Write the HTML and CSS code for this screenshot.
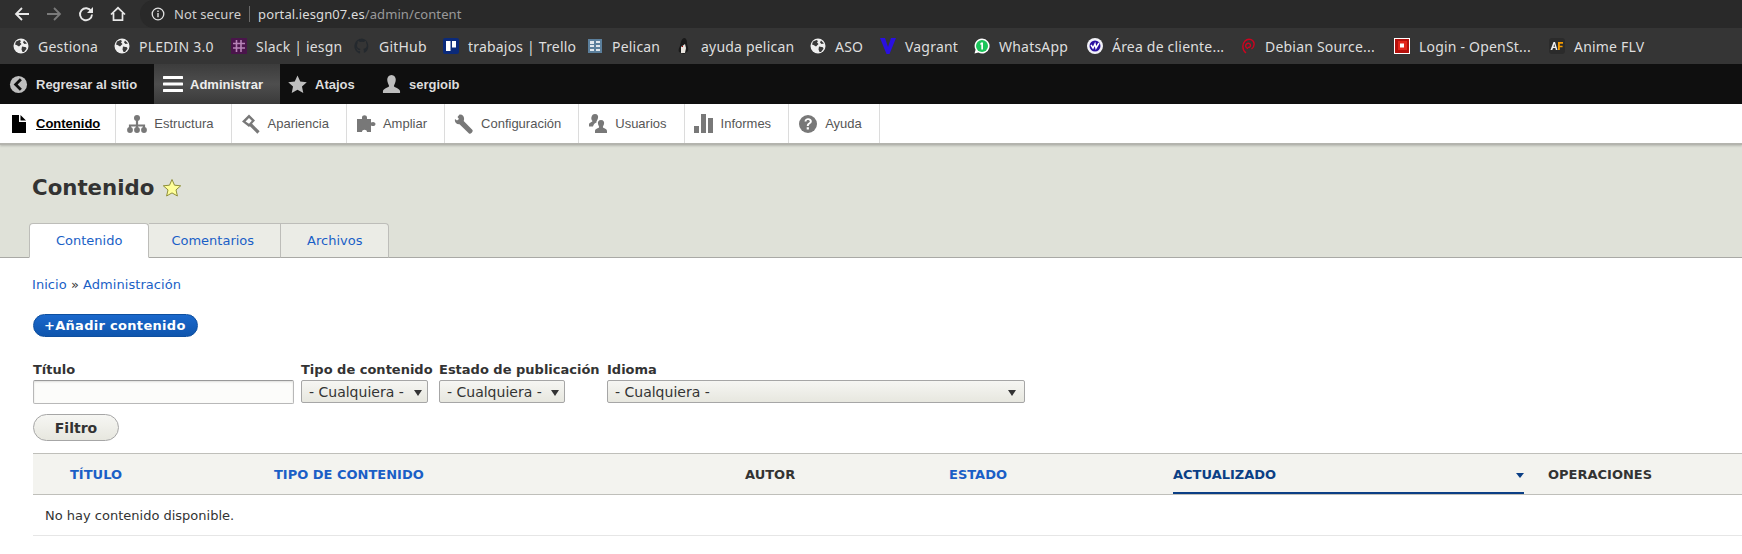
FILE: index.html
```html
<!DOCTYPE html>
<html lang="es">
<head>
<meta charset="utf-8">
<title>Contenido</title>
<link rel="stylesheet" href="styles.css">
</head>
<body>
<div class="browser">
  <div class="navbar">
    <div class="nav-buttons">
      <svg class="nav-icon" viewBox="0 0 16 16"><path d="M15 8H2.500M8 2 2 8l6 6" fill="none" stroke="#e8e8e8" stroke-width="1.800"/></svg>
      <svg class="nav-icon" viewBox="0 0 16 16"><path d="M1 8h12.500M8 2l6 6-6 6" fill="none" stroke="#7a7a7a" stroke-width="1.800"/></svg>
      <svg class="nav-icon" viewBox="0 0 16 16"><path d="M13.200 5.200A6 6 0 1 0 14 8.500" fill="none" stroke="#e8e8e8" stroke-width="1.900"/><path d="M15 1v6H9z" fill="#e8e8e8"/></svg>
      <svg class="nav-icon" viewBox="0 0 16 16"><path d="M1 8.500 8 1.800l7 6.700M3.500 7v7.200h9V7" fill="none" stroke="#e8e8e8" stroke-width="1.700"/></svg>
    </div>
    <div class="omnibox">
      <svg class="info" viewBox="0 0 14 14"><circle cx="7" cy="7" r="5.800" fill="none" stroke="#e0e0e0" stroke-width="1.300"/><path d="M6.300 6h1.400v4.300H6.300zM6.300 3.500h1.400v1.400H6.300z" fill="#e0e0e0"/></svg>
      <span class="not-secure">Not secure</span>
      <span class="url"><b>portal.iesgn07.es</b>/admin/content</span>
    </div>
  </div>
  <div class="bookmarks">
    <a class="bm"><svg class="fav" viewBox="0 0 16 16"><use href="#globe"/></svg>Gestiona</a>
    <a class="bm"><svg class="fav" viewBox="0 0 16 16"><use href="#globe"/></svg>PLEDIN 3.0</a>
    <a class="bm"><svg class="fav" viewBox="0 0 16 16"><rect width="16" height="16" fill="#4a154b"/><path d="M5.500 2v12M10 2v12M2 5.500h12M2 10h12" stroke="#b784b8" stroke-width="1.600"/></svg>Slack | iesgn</a>
    <a class="bm"><svg class="fav" viewBox="0 0 16 16"><path d="M8 .5a7.700 7.700 0 0 0-2.400 15c.4 0 .5-.2.5-.4v-2c-2.200.5-2.700-.9-2.700-.9-.4-.9-.9-1.200-.9-1.200-.7-.5 0-.5 0-.5.8 0 1.200.8 1.200.8.7 1.200 1.900.9 2.300.7.1-.5.3-.9.5-1.100-1.700-.2-3.500-.9-3.500-3.800 0-.8.3-1.500.8-2-.1-.2-.4-1 .1-2 0 0 .6-.2 2.100.8a7.300 7.300 0 0 1 3.800 0c1.500-1 2.100-.8 2.100-.8.4 1 .2 1.800.1 2 .5.5.8 1.200.8 2 0 2.900-1.800 3.600-3.500 3.800.3.2.5.7.5 1.400v2.100c0 .2.1.5.5.4A7.700 7.700 0 0 0 8 .5z" fill="#24292e"/></svg>GitHub</a>
    <a class="bm"><svg class="fav" viewBox="0 0 16 16"><rect width="16" height="16" rx="2" fill="#0b2a7a"/><rect x="3" y="3" width="4.500" height="10" fill="#fff"/><rect x="9" y="3" width="4" height="6.500" fill="#fff"/></svg>trabajos | Trello</a>
    <a class="bm"><svg class="fav" viewBox="0 0 16 16"><rect x="1" y="1" width="14" height="14" fill="#5b7f9c"/><path d="M3 3h4v3H3zM9 3h4v2H9zM3 7h4v2H3zM9 7h4v2H9zM3 11h4v2H3zM9 11h4v2H9z" fill="#dfe6ec"/></svg>Pelican</a>
    <a class="bm"><svg class="fav" viewBox="0 0 16 16"><path d="M8 0C5 1 5 5 4 8c-1 2-2 4-1 6l5 2 4-3c1-3-1-5-1-8S10 0 8 0z" fill="#1a1a1a"/><path d="M5 9l4-3 1 4-1 5H5z" fill="#e8e4de"/><path d="M6 8h1v1H6z" fill="#b00"/></svg>ayuda pelican</a>
    <a class="bm"><svg class="fav" viewBox="0 0 16 16"><use href="#globe"/></svg>ASO</a>
    <a class="bm"><svg class="fav" viewBox="0 0 16 16"><path d="M0 0h5l3 9 3-9h5L9.500 16h-3z" fill="#2a10e0"/></svg>Vagrant</a>
    <a class="bm"><svg class="fav" viewBox="0 0 16 16"><path d="M8 .5a7.500 7.500 0 0 0-6.400 11.300L.5 15.500l3.800-1A7.500 7.500 0 1 0 8 .5z" fill="#fff"/><circle cx="8" cy="8" r="6" fill="#1bc45a"/><path d="M7.200 4.500h1.800v7H7.300V6.400l-1 .4V5.500z" fill="#fff"/></svg>WhatsApp</a>
    <a class="bm"><svg class="fav" viewBox="0 0 16 16"><circle cx="8" cy="8" r="8" fill="#f2f2f8"/><circle cx="8" cy="8" r="5.500" fill="#2a10a0"/><path d="M4 7l2 3 2-4 1 4 3-5" fill="none" stroke="#fff" stroke-width="1.500"/></svg>Área de cliente...</a>
    <a class="bm"><svg class="fav" viewBox="0 0 16 16"><path d="M8 10.500C5.500 10 5 7.500 6.500 6c1.500-1.500 4-.5 4 1.500 0 1.500-1.500 2.500-2.500 1.500M6 15C2 12 2 6 5 3s8-2 9 2c.5 3-1 5-2.500 6" fill="none" stroke="#d0021f" stroke-width="1.400"/></svg>Debian Source...</a>
    <a class="bm"><svg class="fav" viewBox="0 0 16 16"><rect width="16" height="16" fill="#fff"/><rect x="1" y="1" width="14" height="14" fill="#b5100c"/><rect x="4" y="3" width="9" height="9" fill="#e3251b"/><rect x="6" y="5.500" width="4" height="4" fill="#fff"/></svg>Login - OpenSt...</a>
    <a class="bm"><svg class="fav" viewBox="0 0 16 16"><rect width="16" height="16" rx="3" fill="#2b2b2b"/><path d="M1.500 12 4.500 4h1.500l2.500 8H6.900l-.5-2H4l-.7 2zM4.500 8.700h1.500L5.300 6z" fill="#eee"/><path d="M9 4h5v1.700h-3.200v2h2.800v1.600h-2.800V12H9z" fill="#f59a00"/></svg>Anime FLV</a>
  </div>
</div>

<svg class="defs" width="0" height="0" aria-hidden="true">
  <symbol id="globe" viewBox="0 0 16 16">
    <circle cx="8" cy="8" r="7.500" fill="#efefef"/>
    <path d="M3 3.500 6.500 2 8 3 7 4.500 8.500 6 6 8.500 3.500 7 2 6.500zM9 8.500l4 .8.5 1.500L11 14H9.500L8.500 11.500zM11 2.500l3 3-2.500.5L10 4.500z" fill="#3a3a3a"/>
  </symbol>
</svg>

<nav class="toolbar">
  <a class="tb tb-back"><svg class="tb-icon" viewBox="0 0 20 20"><circle cx="10" cy="10" r="9" fill="#bebebe"/><path d="M12.500 4.500 7 10l5.500 5.500" fill="none" stroke="#0f0f0f" stroke-width="3"/></svg>Regresar al sitio</a>
  <a class="tb tb-admin"><svg class="tb-ham" viewBox="0 0 20 18"><path d="M1 2.500h18M1 9h18M1 15.500h18" stroke="#fff" stroke-width="3" stroke-linecap="round"/></svg>Administrar</a>
  <a class="tb tb-short"><svg class="tb-icon" viewBox="0 0 20 20"><path d="M10 .5l2.900 6.300 6.900.8-5.100 4.600 1.400 6.800L10 15.600l-6.100 3.400 1.400-6.800L.2 7.600l6.900-.8z" fill="#bebebe"/></svg>Atajos</a>
  <a class="tb tb-user"><svg class="tb-icon" viewBox="0 0 20 20"><path d="M10 0c3 0 4.500 2.300 4.500 5S13 10 12.500 11.500c-.2 1.500 6.500 2.500 6.500 5.500v2H1v-2c0-3 6.700-4 6.500-5.500C7 10 5.500 7.700 5.500 5S7 0 10 0z" fill="#bebebe"/></svg>sergioib</a>
</nav>

<nav class="tray">
  <a class="tray-item active"><svg class="tray-icon" viewBox="0 0 16 18"><path d="M1 0h7v7h7v11H1z M9.500 0 15 5.500H9.500z" fill="#000"/></svg>Contenido</a>
  <a class="tray-item"><svg class="tray-icon" viewBox="0 0 20 20"><path d="M10 4v11M3 15v-3.500h14V15" fill="none" stroke="#787878" stroke-width="2.200"/><circle cx="10" cy="4" r="3" fill="#787878"/><circle cx="3" cy="16" r="2.900" fill="#787878"/><circle cx="10" cy="16" r="2.900" fill="#787878"/><circle cx="17" cy="16" r="2.900" fill="#787878"/></svg>Estructura</a>
  <a class="tray-item"><svg class="tray-icon" viewBox="0 0 20 20"><path d="M8 .5 14 6.500 8 13 1 7.500zM8 4 4.500 7.500 8 9.800 10.800 6.800z" fill="#787878" fill-rule="evenodd"/><path d="M9.500 10.500 17.500 18.500" stroke="#787878" stroke-width="3.200"/></svg>Apariencia</a>
  <a class="tray-item"><svg class="tray-icon" viewBox="0 0 20 20"><path d="M1 5h5V3.500C6 .5 11 .5 11 3.500V5h4v3.500c2.500-1.500 4.500 0 4.500 1.500s-2 3-4.500 1.500V18h-4c0-3-5-3-5 0H1z" fill="#787878"/></svg>Ampliar</a>
  <a class="tray-item"><svg class="tray-icon" viewBox="0 0 20 20"><path d="M5.500.5 3.500 3 5 5 3 6.500 1 5C.3 8 2 10.500 5.500 10.300L15 19.500c1.500 1 4.500-1.500 3.500-3.500L9.700 7C11 3 9 0 5.500.5z" fill="#787878"/></svg>Configuración</a>
  <a class="tray-item"><svg class="tray-icon" viewBox="0 0 20 20"><path d="M7 0c2.500 0 3.500 2 3 4-.5 2.500-2 3-1.500 4.500-1.500.5-3 1.500-3.500 4H1v-2c0-2 3.500-2.500 3.500-3.500C3.500 6 3 4.500 3.500 3 4 1 5 0 7 0z" fill="#787878"/><path d="M13 6c2.500 0 3.500 2 3 4-.3 1.500-1.500 2.500-1 3.500.5.800 4 1.200 4 3.500v2H7v-2c0-2.300 3.500-2.700 4-3.500.5-1-.7-2-1-3.500C9.500 8 10.500 6 13 6z" fill="#787878"/></svg>Usuarios</a>
  <a class="tray-item"><svg class="tray-icon" viewBox="0 0 20 20"><path d="M0 12h5v7H0zM7 0h5v19H7zM14 4h5v15h-5z" fill="#787878"/></svg>Informes</a>
  <a class="tray-item"><svg class="tray-icon" viewBox="0 0 20 20"><circle cx="10" cy="10" r="9" fill="#787878"/><path d="M6.500 7.500C6.700 5 8.500 4.200 10 4.200c2.500 0 4 1.500 3.800 3.300-.2 2.300-3 2.500-3 4.500H8.800c0-3 3-3.300 3-4.500 0-1-.8-1.500-1.800-1.500S8.500 6.300 8.500 7.500zM8.700 13.200h2.200v2.300H8.700z" fill="#fff"/></svg>Ayuda</a>
</nav>

<header class="page-head">
  <h1 class="page-title">Contenido <svg class="fav-star" viewBox="0 0 20 20"><path d="M10 1.500l2.500 5.700 6.200.6-4.700 4.100 1.400 6.100L10 14.900 4.600 18l1.400-6.100L1.300 7.800l6.200-.6z" fill="#ffff9a" stroke="#8f8f3a" stroke-width="1"/></svg></h1>
  <ul class="tabs">
    <li class="tab active"><a>Contenido</a></li>
    <li class="tab"><a>Comentarios</a></li>
    <li class="tab"><a>Archivos</a></li>
  </ul>
</header>

<main class="content">
  <p class="crumbs"><a>Inicio</a> » <a>Administración</a></p>
  <p class="actions"><a class="add-btn">+Añadir contenido</a></p>
  <form class="filters">
    <div class="filter-row">
      <label class="field"><span class="field-label">Título</span><input class="text-input" type="text"></label>
      <label class="field"><span class="field-label">Tipo de contenido</span><span class="select-wrap"><select class="select sel-type"><option>- Cualquiera -</option></select></span></label>
      <label class="field"><span class="field-label">Estado de publicación</span><span class="select-wrap"><select class="select sel-state"><option>- Cualquiera -</option></select></span></label>
      <label class="field"><span class="field-label">Idioma</span><span class="select-wrap select-wrap-lang"><select class="select sel-lang"><option>- Cualquiera -</option></select></span></label>
    </div>
    <button class="filter-btn" type="button">Filtro</button>
  </form>
  <table class="data">
    <colgroup><col class="c0"><col class="c1"><col class="c2"><col class="c3"><col class="c4"><col class="c5"><col class="c6"></colgroup>
    <thead>
      <tr>
        <th></th>
        <th><a>Título</a></th>
        <th><a>Tipo de contenido</a></th>
        <th>Autor</th>
        <th><a>Estado</a></th>
        <th class="sorted"><a>Actualizado</a><span class="sort-arrow"></span></th>
        <th>Operaciones</th>
      </tr>
    </thead>
    <tbody>
      <tr><td colspan="7">No hay contenido disponible.</td></tr>
    </tbody>
  </table>
</main>
</body>
</html>
```

FILE: styles.css
```css
html, body { margin: 0; padding: 0; }
body {
  width: 1742px;
  height: 554px;
  overflow: hidden;
  background: #fff;
  color: #333;
  font-family: "DejaVu Sans", sans-serif;
  font-size: 13px;
}
a { color: #1a5fc6; text-decoration: none; }
.defs { display: block; height: 0; }

/* browser chrome */
.browser { font-family: "Noto Sans", sans-serif; color: #dedede; }
.navbar { height: 28px; background: #2f2f2f; display: flex; align-items: center; }
.nav-buttons { display: flex; gap: 16px; padding-left: 14px; width: 126px; box-sizing: border-box; }
.nav-icon { width: 16px; height: 16px; }
.omnibox {
  margin-left: 14px;
  flex: 1;
  height: 28px;
  background: #292929;
  border-radius: 14px 0 0 14px;
  display: flex;
  align-items: center;
  font-size: 13px;
  letter-spacing: .1px;
  color: #9a9a9a;
}
.info { width: 14px; height: 14px; margin-left: 11px; }
.not-secure { margin-left: 9px; color: #d0d0d0; padding-right: 8px; border-right: 1px solid #6a6a6a; line-height: 16px; }
.url { margin-left: 8px; }
.url b { font-weight: 400; color: #dcdcdc; }
.bookmarks { height: 36px; background: #353535; display: flex; align-items: center; padding-left: 13px; font-size: 14px; letter-spacing: .2px; white-space: nowrap; }
.bm { color: #dedede; display: flex; align-items: center; gap: 9px; flex: none; }
.bm:nth-child(1) { width: 101px; }
.bm:nth-child(2) { width: 117px; }
.bm:nth-child(3) { width: 123px; }
.bm:nth-child(4) { width: 89px; }
.bm:nth-child(5) { width: 144px; }
.bm:nth-child(6) { width: 89px; }
.bm:nth-child(7) { width: 134px; }
.bm:nth-child(8) { width: 70px; }
.bm:nth-child(9) { width: 94px; }
.bm:nth-child(10) { width: 113px; }
.bm:nth-child(11) { width: 153px; }
.bm:nth-child(12) { width: 154px; }
.bm:nth-child(13) { width: 155px; }
.fav { width: 16px; height: 16px; flex: none; }

/* admin toolbar */
.toolbar { height: 40px; background: #0f0f0f; display: flex; font-family: "Liberation Sans", sans-serif; font-weight: 700; font-size: 13px; }
.tb { color: #ddd; display: flex; align-items: center; height: 40px; }
.tb-icon { width: 19px; height: 19px; margin-right: 8px; }
.tb-back { padding-left: 9px; width: 154px; box-sizing: border-box; }
.tb-admin { width: 126px; box-sizing: border-box; padding-left: 9px; background: linear-gradient(#3c3c3c, #4e4e4e 50%, #3a3a3a); color: #eee; }
.tb-ham { width: 20px; height: 18px; margin-right: 7px; }
.tb-short { margin-left: 8px; width: 94px; }

/* tray */
.tray { height: 39px; background: #fff; display: flex; font-family: "Liberation Sans", sans-serif; font-size: 13px; border-bottom: 2px solid #b4b4ae; box-shadow: 0 1px 2px rgba(0,0,0,.18); position: relative; }
.tray-item { color: #565656; display: flex; align-items: center; gap: 7px; padding: 0 17px 0 9px; border-right: 1px solid #dcdcdc; }
.tray-item:nth-child(2) { padding-left: 11px; }
.tray-icon { width: 20px; height: 20px; flex: none; }
.tray-item.active { color: #000; font-weight: 700; text-decoration: underline; padding: 0 15px 0 11px; gap: 9px; }
.tray-item.active .tray-icon { width: 16px; height: 18px; }

/* page header */
.page-head { height: 113px; background: #dfe1d8; border-bottom: 1px solid #a9a9a5; box-sizing: border-box; display: flex; flex-direction: column; justify-content: space-between; padding-left: 33px; }
.page-title { margin: 29px 0 0 -1px; font-size: 21.3px; line-height: 28px; font-weight: 700; color: #333; display: flex; align-items: center; gap: 8px; }
.fav-star { width: 20px; height: 20px; }
.tabs { list-style: none; margin: 0 0 -1px -4px; padding: 0; display: flex; }
.tab { height: 35px; box-sizing: border-box; background: #ebece6; border: 1px solid #bdbdb9; border-left: 0; border-bottom: 1px solid #a9a9a5; display: flex; align-items: center; font-size: 13px; }
.tab:first-child { border-left: 1px solid #bdbdb9; border-top-left-radius: 4px; }
.tab:last-child { border-top-right-radius: 4px; }
.tab a { padding: 0 26px; }
.tab:nth-child(2) a { padding: 0 26px 0 22px; }
.tab.active { background: #fff; border-bottom-color: #fff; border-top-left-radius: 4px; border-top-right-radius: 4px; }

/* content */
.content { padding-left: 33px; }
.crumbs { margin: 19px 0 0 -1px; line-height: 16px; font-size: 13px; letter-spacing: .05px; }
.actions { margin: 21px 0 0; display: flex; }
.add-btn { display: block; width: 165px; height: 23px; box-sizing: border-box; border-radius: 12px; background: linear-gradient(#1a68cc, #0f55ad); border: 1px solid #0e4f9f; color: #fff; font-weight: 700; font-size: 13px; line-height: 21px; padding-left: 10px; letter-spacing: .3px; }
.filters { margin-top: 25px; }
.filter-row { display: grid; grid-template-columns: 268px 138px 168px auto; }
.field { display: flex; flex-direction: column; align-items: flex-start; }
.field-label { font-weight: 700; font-size: 13px; line-height: 16px; margin-bottom: 2px; white-space: nowrap; }
.text-input { width: 261px; height: 24px; box-sizing: border-box; border: 1px solid #b8b8b8; border-top-color: #999; border-radius: 2px; background: #fcfcfa; padding: 0; box-shadow: inset 0 1px 2px rgba(0,0,0,.12); }
.select-wrap { display: block; position: relative; }
.select-wrap::after { content: ""; position: absolute; right: 6px; top: 10px; border: 4.500px solid transparent; border-top: 6px solid #333; border-bottom: 0; pointer-events: none; }
.select-wrap-lang::after { right: 9px; }
.select { appearance: none; -webkit-appearance: none; height: 23px; box-sizing: border-box; border: 1px solid #a6a6a6; border-radius: 2px; background: linear-gradient(#f6f6f3, #e7e7df); font-family: "DejaVu Sans", sans-serif; font-size: 14px; color: #333; padding: 0 0 0 7px; display: block; }
.sel-type { width: 127px; }
.sel-state { width: 126px; }
.sel-lang { width: 418px; }
.filter-btn { display: block; margin-top: 10px; width: 86px; height: 27px; box-sizing: border-box; border: 1px solid #a6a6a6; border-radius: 14px; background: linear-gradient(#f6f6f3, #e7e7df); font-family: "DejaVu Sans", sans-serif; font-weight: 700; font-size: 14px; color: #333; padding: 0; }

.data { margin-top: 12px; width: 1709px; border-collapse: collapse; table-layout: fixed; font-size: 13px; }
.c0 { width: 25px; } .c1 { width: 204px; } .c2 { width: 471px; } .c3 { width: 204px; } .c4 { width: 224px; } .c5 { width: 375px; } .c6 { width: 206px; }
.data th { height: 41px; box-sizing: border-box; background: #f3f3ef; border-top: 1px solid #bfbfba; border-bottom: 1px solid #bfbfba; text-transform: uppercase; text-align: left; font-size: 13px; padding: 0 12px; }
.data th.sorted { position: relative; }
.data th.sorted a { color: #0b3f85; }
.data th.sorted::after { content: ""; position: absolute; left: 12px; right: 12px; bottom: 0; height: 2px; background: #0b3f85; }
.sort-arrow { position: absolute; right: 12px; top: 19px; border: 4px solid transparent; border-top: 5px solid #0b3f85; border-bottom: 0; }
.data td { height: 41px; box-sizing: border-box; padding: 0 12px; border-bottom: 1px solid #e6e6e6; font-size: 13px; }
```
